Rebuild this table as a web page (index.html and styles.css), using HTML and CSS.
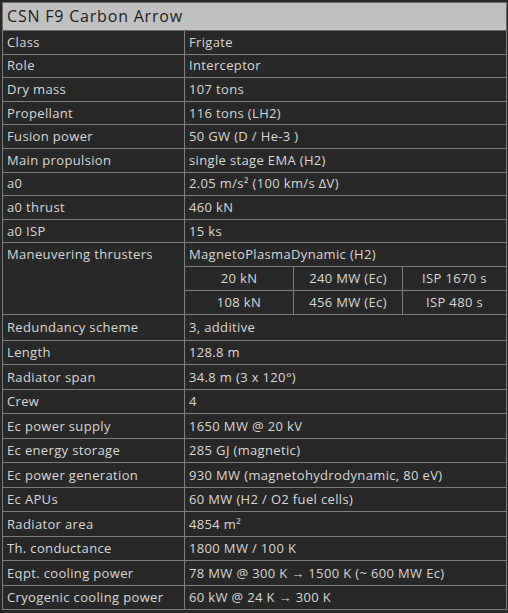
FILE: index.html
```html
<!DOCTYPE html>
<html>
<head>
<meta charset="utf-8">
<link rel="stylesheet" href="styles.css">
</head>
<body>
<table class="spec">
  <colgroup>
    <col class="w-key">
    <col class="w-sub">
    <col class="w-sub">
    <col class="w-last">
  </colgroup>
  <tr class="head"><th colspan="4">CSN F9 Carbon Arrow</th></tr>
  <tr><td class="k">Class</td><td colspan="3">Frigate</td></tr>
  <tr><td class="k">Role</td><td colspan="3">Interceptor</td></tr>
  <tr><td class="k">Dry mass</td><td colspan="3">107 tons</td></tr>
  <tr><td class="k">Propellant</td><td colspan="3">116 tons (LH2)</td></tr>
  <tr><td class="k">Fusion power</td><td colspan="3">50 GW (D / He-3 )</td></tr>
  <tr><td class="k">Main propulsion</td><td colspan="3">single stage EMA (H2)</td></tr>
  <tr><td class="k">a0</td><td colspan="3">2.05 m/s² (100 km/s ΔV)</td></tr>
  <tr><td class="k">a0 thrust</td><td colspan="3">460 kN</td></tr>
  <tr><td class="k">a0 ISP</td><td colspan="3">15 ks</td></tr>
  <tr><td class="k top" rowspan="3">Maneuvering thrusters</td><td colspan="3">MagnetoPlasmaDynamic (H2)</td></tr>
  <tr class="sub"><td>20 kN</td><td>240 MW (Ec)</td><td>ISP 1670 s</td></tr>
  <tr class="sub"><td>108 kN</td><td>456 MW (Ec)</td><td>ISP 480 s</td></tr>
  <tr class="lo first"><td class="k">Redundancy scheme</td><td colspan="3">3, additive</td></tr>
  <tr class="lo"><td class="k">Length</td><td colspan="3">128.8 m</td></tr>
  <tr class="lo"><td class="k">Radiator span</td><td colspan="3">34.8 m (3 x 120°)</td></tr>
  <tr class="lo"><td class="k">Crew</td><td colspan="3">4</td></tr>
  <tr class="lo"><td class="k">Ec power supply</td><td colspan="3">1650 MW @ 20 kV</td></tr>
  <tr class="lo"><td class="k">Ec energy storage</td><td colspan="3">285 GJ (magnetic)</td></tr>
  <tr class="lo"><td class="k">Ec power generation</td><td colspan="3">930 MW (magnetohydrodynamic, 80 eV)</td></tr>
  <tr class="lo"><td class="k">Ec APUs</td><td colspan="3">60 MW (H2 / O2 fuel cells)</td></tr>
  <tr class="lo"><td class="k">Radiator area</td><td colspan="3">4854 m²</td></tr>
  <tr class="lo"><td class="k">Th. conductance</td><td colspan="3">1800 MW / 100 K</td></tr>
  <tr class="lo"><td class="k">Eqpt. cooling power</td><td colspan="3">78 MW @ 300 K → 1500 K (~ 600 MW Ec)</td></tr>
  <tr class="lo"><td class="k">Cryogenic cooling power</td><td colspan="3">60 kW @ 24 K → 300 K</td></tr>
</table>
</body>
</html>
```

FILE: styles.css
```css
html, body {
  margin: 0;
  padding: 0;
  background: #282828;
}
body {
  padding: 2px;
  font-family: "Open Sans", "Noto Sans", sans-serif;
  font-size: 13px;
  letter-spacing: 0.35px;
  color: #d8d8d8;
}
.spec {
  border-collapse: collapse;
  width: 504px;
  table-layout: fixed;
}
.w-key { width: 182px; }
.w-sub { width: 109px; }
.w-last { width: 104px; }
.spec td, .spec th {
  border: 1px solid #7e7e7e;
  padding: 0 4px;
  height: 22.6px;
  line-height: 17px;
  text-align: left;
  vertical-align: middle;
  white-space: nowrap;
  overflow: hidden;
}
.spec .head th {
  background: #c0c0c0;
  color: #1c1c1c;
  font-weight: normal;
  font-size: 16px;
  letter-spacing: 0.8px;
  height: 27px;
  padding: 0 4px;
  border-color: #6a6a6a;
}
.spec td.top { vertical-align: top; padding-top: 3px; }
.spec .sub td { text-align: center; height: 23.2px; }
.spec .lo td { height: 23.5px; }
.spec .lo.first td { height: 24.6px; }
```
